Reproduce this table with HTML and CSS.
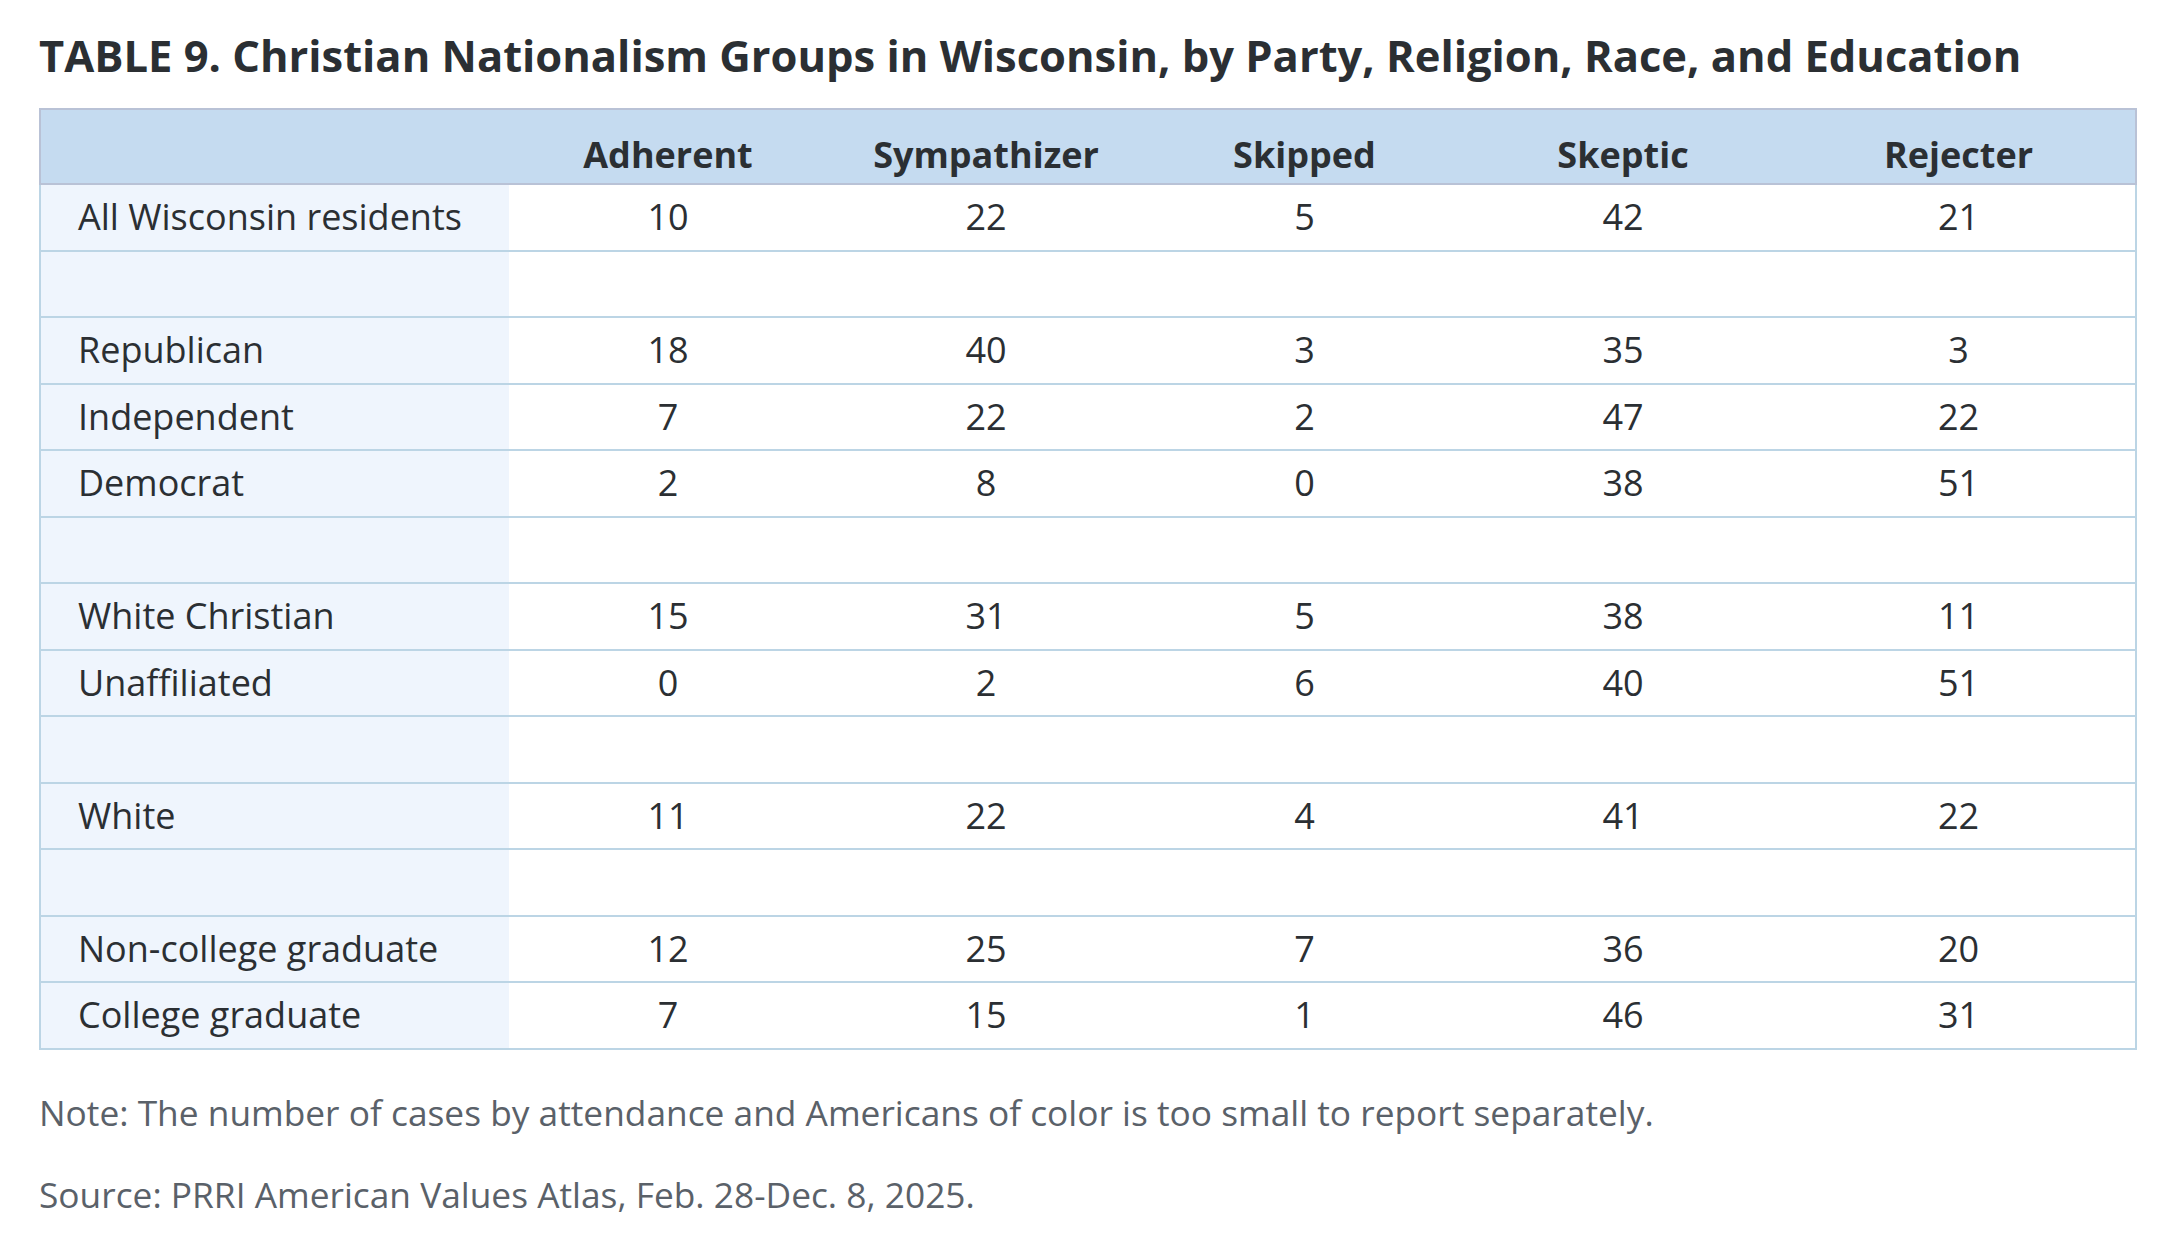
FILE: index.html
```html
<!DOCTYPE html>
<html>
<head>
<meta charset="utf-8">
<link rel="stylesheet" href="styles.css">
</head>
<body>
<div class="page">
  <h1 class="title">TABLE 9. Christian Nationalism Groups in Wisconsin, by Party, Religion, Race, and Education</h1>
  <table class="data">
    <colgroup>
      <col class="c-label"><col class="c-num"><col class="c-num"><col class="c-num3"><col class="c-num"><col>
    </colgroup>
    <thead>
      <tr><th></th><th>Adherent</th><th>Sympathizer</th><th>Skipped</th><th>Skeptic</th><th>Rejecter</th></tr>
    </thead>
    <tbody>
      <tr><td>All Wisconsin residents</td><td>10</td><td>22</td><td>5</td><td>42</td><td>21</td></tr>
      <tr><td></td><td></td><td></td><td></td><td></td><td></td></tr>
      <tr><td>Republican</td><td>18</td><td>40</td><td>3</td><td>35</td><td>3</td></tr>
      <tr><td>Independent</td><td>7</td><td>22</td><td>2</td><td>47</td><td>22</td></tr>
      <tr><td>Democrat</td><td>2</td><td>8</td><td>0</td><td>38</td><td>51</td></tr>
      <tr><td></td><td></td><td></td><td></td><td></td><td></td></tr>
      <tr><td>White Christian</td><td>15</td><td>31</td><td>5</td><td>38</td><td>11</td></tr>
      <tr><td>Unaffiliated</td><td>0</td><td>2</td><td>6</td><td>40</td><td>51</td></tr>
      <tr><td></td><td></td><td></td><td></td><td></td><td></td></tr>
      <tr><td>White</td><td>11</td><td>22</td><td>4</td><td>41</td><td>22</td></tr>
      <tr><td></td><td></td><td></td><td></td><td></td><td></td></tr>
      <tr><td>Non-college graduate</td><td>12</td><td>25</td><td>7</td><td>36</td><td>20</td></tr>
      <tr><td>College graduate</td><td>7</td><td>15</td><td>1</td><td>46</td><td>31</td></tr>
    </tbody>
  </table>
  <p class="note">Note: The number of cases by attendance and Americans of color is too small to report separately.</p>
  <p class="note">Source: PRRI American Values Atlas, Feb. 28-Dec. 8, 2025.</p>
</div>
</body>
</html>
```
FILE: styles.css
```css
html, body {
  margin: 0;
  padding: 0;
  background: #ffffff;
}
.page {
  padding: 30px 0 0 39px;
  font-family: "Open Sans", "Liberation Sans", sans-serif;
  color: #2b2f33;
}
.title {
  margin: 0 0 26px 0;
  font-size: 43.5px;
  font-weight: 700;
  line-height: 52px;
  color: #2b2f33;
  white-space: nowrap;
}
.data {
  border-collapse: collapse;
  table-layout: fixed;
  width: 2098px;
  font-size: 36px;
}
.c-label { width: 469px; }
.c-num { width: 318px; }
.c-num3 { width: 319px; }
.data thead th {
  background: #c5dbf0;
  border-top: 2px solid #b9c2d6;
  border-bottom: 2px solid #b9c2d6;
  height: 67px;
  padding: 0 0 6px 0;
  vertical-align: bottom;
  text-align: center;
  font-weight: 700;
  font-size: 36px;
  line-height: 44px;
  color: #2b2f33;
}
.data thead th:first-child { border-left: 2px solid #b9c2d6; }
.data thead th:last-child { border-right: 2px solid #b9c2d6; }
.data tbody td {
  height: 64.5px;
  padding: 0;
  border-bottom: 2px solid #bcd5e5;
  text-align: center;
  vertical-align: middle;
  line-height: 44px;
  font-weight: 400;
}
.data tbody td:first-child {
  background: #eff5fd;
  text-align: left;
  padding-left: 37px;
  border-left: 2px solid #bcd5e5;
}
.data tbody td:last-child { border-right: 2px solid #bcd5e5; }
.note {
  margin: 38px 0 0 0;
  font-size: 35.3px;
  line-height: 48px;
  color: #5a6169;
}
.note + .note { margin-top: 34px; }
```
